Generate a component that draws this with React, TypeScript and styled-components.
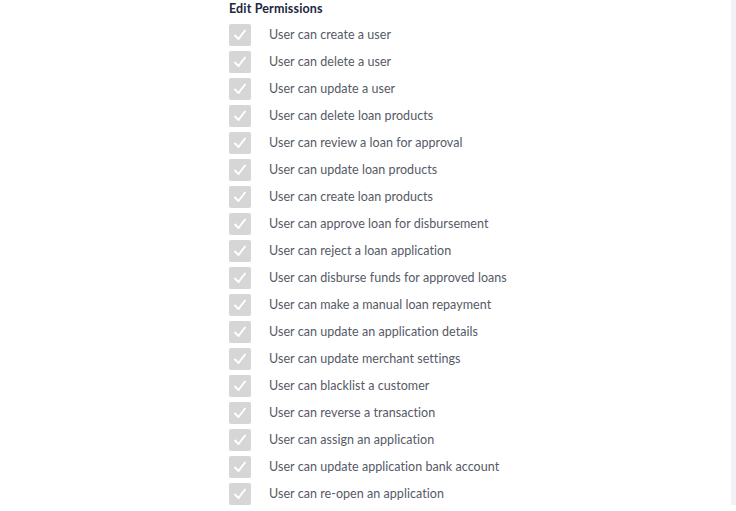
import * as React from 'react';
import styled, { createGlobalStyle } from 'styled-components';

const permissions = [
    'User can create a user',
    'User can delete a user',
    'User can update a user',
    'User can delete loan products',
    'User can review a loan for approval',
    'User can update loan products',
    'User can create loan products',
    'User can approve loan for disbursement',
    'User can reject a loan application',
    'User can disburse funds for approved loans',
    'User can make a manual loan repayment',
    'User can update an application details',
    'User can update merchant settings',
    'User can blacklist a customer',
    'User can reverse a transaction',
    'User can assign an application',
    'User can update application bank account',
    'User can re-open an application',
];

const GlobalStyle = createGlobalStyle`
    html, body {
        margin: 0;
        padding: 0;
        background: #ffffff;
        font-family: Lato, "Open Sans", sans-serif;
    }
`;

const Page = styled.div`
    display: flex;
    height: 511px;
    overflow: hidden;
`;

const Content = styled.div`
    flex: 1;
    padding-left: 229px;
`;

const Title = styled.h4`
    margin: 0 0 7px;
    padding-top: 1px;
    font-size: 12.5px;
    line-height: 16px;
    font-weight: 700;
    letter-spacing: 0.15px;
    color: #1c2740;
`;

const List = styled.ul`
    list-style: none;
    margin: 0;
    padding: 0;
    display: flex;
    flex-direction: column;
    gap: 5px;
`;

const Row = styled.li`
    display: flex;
    align-items: center;
    height: 22px;
`;

const Box = styled.span<{ checked: boolean }>`
    display: flex;
    width: 22px;
    height: 22px;
    border-radius: 2px;
    background: ${p => (p.checked ? '#d6d6d6' : '#ffffff')};
    flex-shrink: 0;
`;

const Label = styled.span`
    margin-left: 18px;
    padding-bottom: 1px;
    font-size: 12.5px;
    line-height: 16px;
    color: #555a66;
    letter-spacing: 0.05px;
`;

const ScrollTrack = styled.div`
    width: 5px;
    height: 505px;
    background: #f1f2f5;
`;

const Check = () => (
    <svg width="22" height="22" viewBox="0 0 22 22" fill="none">
        <path d="M6 11.5 L9.5 15 L16 6.5" stroke="#ffffff" strokeWidth="2" strokeLinecap="round" strokeLinejoin="round" />
    </svg>
);

export default function App() {
    return (
        <Page>
            <GlobalStyle />
            <Content>
                <Title>Edit Permissions</Title>
                <List>
                    {permissions.map(p => (
                        <Row key={p}>
                            <Box checked>
                                <Check />
                            </Box>
                            <Label>{p}</Label>
                        </Row>
                    ))}
                </List>
            </Content>
            <ScrollTrack />
        </Page>
    );
}
